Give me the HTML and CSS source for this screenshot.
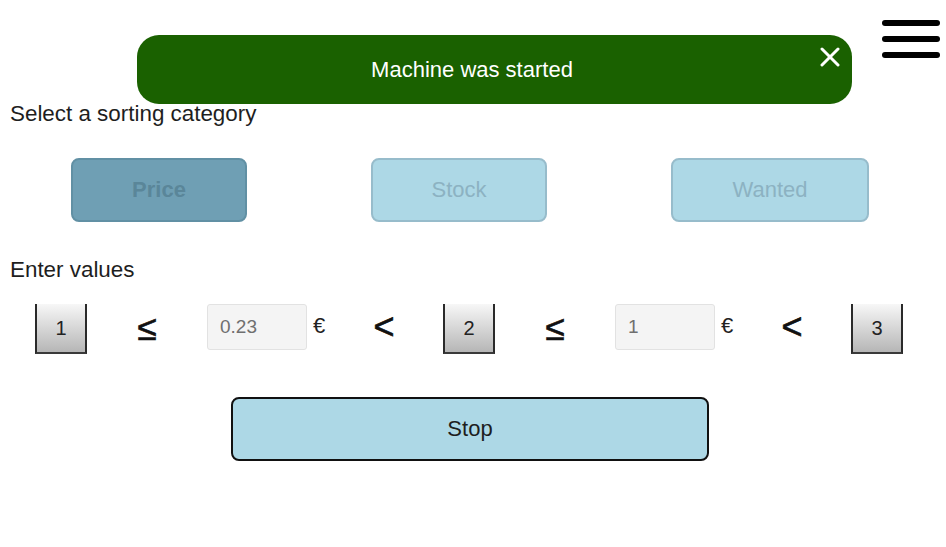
FILE: index.html
```html
<!DOCTYPE html>
<html lang="en">
<head>
<meta charset="utf-8">
<title>Sorting machine</title>
<link rel="stylesheet" href="styles.css">
</head>
<body>
<header class="topbar">
  <button class="menu" aria-label="Menu">
    <svg width="60" height="42" viewBox="0 0 60 42"><g stroke="#000" stroke-width="6" stroke-linecap="round"><line x1="4" y1="5" x2="56" y2="5"/><line x1="4" y1="21" x2="56" y2="21"/><line x1="4" y1="37" x2="56" y2="37"/></g></svg>
  </button>
</header>
<main class="content">
  <p class="label">Select a sorting category</p>
  <div class="categories">
    <button class="cat cat-active">Price</button>
    <button class="cat">Stock</button>
    <button class="cat cat-wide">Wanted</button>
  </div>
  <p class="label label-values">Enter values</p>
  <div class="values">
    <div class="bin">1</div>
    <span class="op op-le">≤</span>
    <div class="field"><input class="num" value="0.23"><span class="cur">€</span></div>
    <span class="op op-lt">&lt;</span>
    <div class="bin">2</div>
    <span class="op op-le">≤</span>
    <div class="field"><input class="num" value="1"><span class="cur">€</span></div>
    <span class="op op-lt">&lt;</span>
    <div class="bin">3</div>
  </div>
  <button class="stop">Stop</button>
</main>
<div class="toast">
  <span class="toast-text">Machine was started</span>
  <button class="toast-close" aria-label="Close">
    <svg width="20" height="20" viewBox="0 0 20 20"><g stroke="#fff" stroke-width="3" stroke-linecap="round"><line x1="2" y1="2" x2="18" y2="18"/><line x1="18" y1="2" x2="2" y2="18"/></g></svg>
  </button>
</div>
</body>
</html>
```
FILE: styles.css
```css
* { box-sizing: border-box; }
html, body { margin: 0; padding: 0; background: #fff; }
body {
  font-family: "Liberation Sans", Arial, sans-serif;
  color: #1c1c1c;
  width: 946px;
  height: 547px;
  overflow: hidden;
  position: relative;
}
.topbar {
  height: 101px;
  display: flex;
  justify-content: flex-end;
  align-items: flex-start;
  padding: 18px 5px 0 0;
}
.menu {
  border: 0;
  background: none;
  padding: 0;
  width: 60px;
  height: 42px;
  display: block;
}
.menu svg { display: block; }
.content { padding: 0 0 0 10px; }
.label {
  margin: 0;
  font-size: 22.4px;
  line-height: 25px;
  color: #1e1e1e;
}
.categories {
  display: flex;
  gap: 124px;
  margin: 32px 0 0 61px;
}
.cat {
  width: 176px;
  height: 64px;
  border-radius: 8px;
  border: 2px solid #97bccb;
  background: #add8e6;
  color: #8cb2c2;
  font-family: "Liberation Sans", Arial, sans-serif;
  font-size: 22px;
  padding: 0;
}
.cat-wide { width: 198px; }
.cat-active {
  background: #6f9fb4;
  border-color: #6190a4;
  color: #5a8699;
  font-weight: bold;
}
.label-values { margin-top: 35px; }
.values {
  display: flex;
  align-items: center;
  gap: 50px;
  margin: 22px 0 0 25px;
  height: 50px;
}
.bin {
  width: 52px;
  height: 50px;
  border-left: 2px solid #2a2a2a;
  border-right: 2px solid #2a2a2a;
  border-bottom: 2px solid #3a3a3a;
  background: linear-gradient(#f7f7f7, #b6b6b6);
  font-size: 20px;
  color: #222;
  display: flex;
  align-items: center;
  justify-content: center;
  padding-top: 1px;
  align-self: flex-start;
}
.op {
  line-height: 1;
  text-align: center;
  color: #111;
  display: flex;
  justify-content: center;
  -webkit-text-stroke: 0.7px #111;
}
.op-le { width: 20px; font-size: 35px; margin-top: -3px; }
.op-lt { width: 18px; font-size: 36px; margin-top: -4px; }
.field {
  display: flex;
  align-items: center;
  gap: 6px;
  align-self: flex-start;
}
.num {
  width: 100px;
  height: 46px;
  border: 1px solid #e2e2e2;
  border-radius: 3px;
  background: #f4f4f4;
  color: #6f6f6f;
  font-family: "Liberation Sans", Arial, sans-serif;
  font-size: 19px;
  padding: 0 0 0 12px;
  outline: none;
}
.cur {
  width: 12px;
  font-size: 22px;
  color: #222;
  margin-top: -2px;
}
.stop {
  display: block;
  margin: 43px 0 0 221px;
  width: 478px;
  height: 64px;
  border: 2px solid #111;
  border-radius: 8px;
  background: #add8e6;
  color: #1e1e1e;
  font-family: "Liberation Sans", Arial, sans-serif;
  font-size: 22px;
  padding: 0;
}
.toast {
  position: absolute;
  left: 137px;
  top: 35px;
  width: 715px;
  height: 69px;
  border-radius: 22px;
  background: #1a6100;
  display: flex;
  align-items: center;
  padding-right: 45px;
}
.toast-text {
  flex: 1;
  text-align: center;
  color: #fff;
  font-size: 22px;
}
.toast-close {
  position: absolute;
  top: 12px;
  right: 12px;
  width: 20px;
  height: 20px;
  border: 0;
  background: none;
  padding: 0;
}
.toast-close svg { display: block; }
```
